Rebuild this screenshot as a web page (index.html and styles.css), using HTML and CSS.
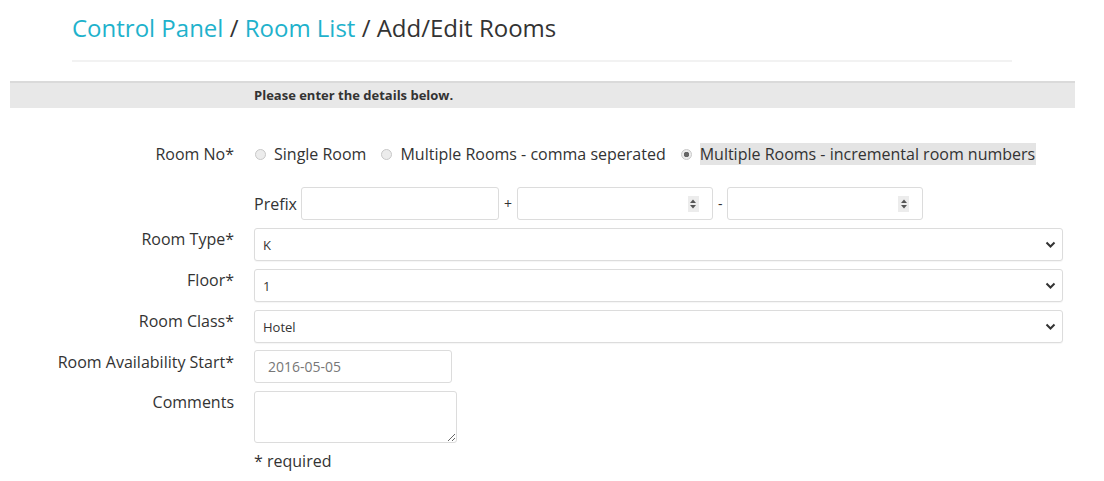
FILE: index.html
```html
<!DOCTYPE html>
<html>
<head>
<meta charset="utf-8">
<link rel="stylesheet" href="styles.css">
</head>
<body>
<div class="header">
  <h1 class="title"><a class="crumb">Control Panel</a> / <a class="crumb">Room List</a> / Add/Edit Rooms</h1>
</div>
<div class="bar">Please enter the details below.</div>
<form class="form">
  <label class="lbl lbl-radio">Room No*</label>
  <div class="radios">
    <label class="opt"><input type="radio" name="rn" class="radio"><span>Single Room</span></label>
    <label class="opt"><input type="radio" name="rn" class="radio"><span>Multiple Rooms - comma seperated</span></label>
    <label class="opt"><input type="radio" name="rn" class="radio" checked><span class="hl">Multiple Rooms - incremental room numbers</span></label>
  </div>

  <div class="spacer"></div>
  <div class="prefix-row">
    <span class="ptext">Prefix</span>
    <input class="box prefix" type="text">
    <span class="sep">+</span>
    <div class="box num"><input class="bare" type="text"><span class="spin"><svg width="8" height="12" viewBox="0 0 8 12"><path d="M4 1.5 L7 5 L1 5 Z" fill="#555"/><path d="M4 10.5 L7 7 L1 7 Z" fill="#555"/></svg></span></div>
    <span class="sep">-</span>
    <div class="box num"><input class="bare" type="text"><span class="spin"><svg width="8" height="12" viewBox="0 0 8 12"><path d="M4 1.5 L7 5 L1 5 Z" fill="#555"/><path d="M4 10.5 L7 7 L1 7 Z" fill="#555"/></svg></span></div>
  </div>

  <label class="lbl">Room Type*</label>
  <div class="box sel"><span class="seltext">K</span><svg class="chev" width="11" height="8" viewBox="0 0 11 8"><path d="M1.5 1.5 L5.5 5.5 L9.5 1.5" fill="none" stroke="#333" stroke-width="2"/></svg></div>

  <label class="lbl">Floor*</label>
  <div class="box sel"><span class="seltext">1</span><svg class="chev" width="11" height="8" viewBox="0 0 11 8"><path d="M1.5 1.5 L5.5 5.5 L9.5 1.5" fill="none" stroke="#333" stroke-width="2"/></svg></div>

  <label class="lbl">Room Class*</label>
  <div class="box sel"><span class="seltext">Hotel</span><svg class="chev" width="11" height="8" viewBox="0 0 11 8"><path d="M1.5 1.5 L5.5 5.5 L9.5 1.5" fill="none" stroke="#333" stroke-width="2"/></svg></div>

  <label class="lbl">Room Availability Start*</label>
  <div class="date-wrap"><input class="box date" type="text" value="2016-05-05"></div>

  <label class="lbl">Comments</label>
  <div><textarea class="box comments"></textarea></div>

  <div class="spacer"></div>
  <div class="req">* required</div>
</form>
</body>
</html>
```

FILE: styles.css
```css
* { box-sizing: border-box; }
body {
  margin: 0;
  font-family: "Open Sans", "DejaVu Sans", sans-serif;
  color: #333;
  background: #fff;
}
.header {
  margin-left: 72px;
  width: 940px;
  padding-top: 12px;
  padding-bottom: 16px;
  border-bottom: 2px solid #f2f2f2;
}
.title {
  margin: 0;
  font-size: 24px;
  font-weight: 400;
  line-height: 32px;
  color: #333;
}
.crumb { color: #1fb2cc; text-decoration: none; }
.bar {
  margin-top: 19px;
  margin-left: 10px;
  width: 1065px;
  height: 27px;
  border-top: 2px solid #dadada;
  background: #e8e8e8;
  padding-left: 244px;
  font-size: 13px;
  font-weight: 700;
  line-height: 24px;
  color: #333;
}
.form {
  margin: 35px 0 0 10px;
  width: 1053px;
  display: grid;
  grid-template-columns: 224px 809px;
  column-gap: 20px;
  row-gap: 8px;
  align-items: start;
}
.lbl {
  text-align: right;
  font-size: 16px;
  line-height: 20px;
  padding-top: 1px;
}
.lbl-radio { padding-top: 0; line-height: 22px; }
.radios {
  display: flex;
  align-items: center;
  gap: 14px;
  font-size: 16px;
  line-height: 22px;
}
.opt { display: flex; align-items: center; }
.radio {
  appearance: none;
  -webkit-appearance: none;
  width: 11px;
  height: 11px;
  margin: 0 8px 0 1px;
  border-radius: 50%;
  border: 1px solid #c8c8c8;
  background: #ececec;
}
.radio:checked {
  background: radial-gradient(circle, #666 0 2.5px, #ececec 3px);
}
.hl { background: #e4e4e4; padding-right: 1px; }
.spacer { height: 13px; }
.prefix-row {
  display: flex;
  align-items: center;
  font-size: 16px;
  margin-top: 14px;
}
.ptext { margin-right: 4px; }
.sep { margin: 0 5px; font-size: 14px; color: #333; }
.box {
  border: 1px solid #dcdcdc;
  border-radius: 3px;
  background: #fff;
  height: 33px;
  font-family: "Open Sans", "DejaVu Sans", sans-serif;
}
.prefix { width: 198px; }
.num {
  width: 196px;
  display: flex;
  align-items: center;
}
.bare {
  border: 0;
  outline: none;
  flex: 1;
  min-width: 0;
  height: 100%;
  background: transparent;
}
.spin {
  width: 11px;
  height: 16px;
  background: #ececec;
  margin-right: 13px;
  display: flex;
  align-items: center;
  justify-content: center;
}
.sel {
  display: flex;
  align-items: center;
  justify-content: space-between;
  padding: 0 6px 0 8px;
  font-size: 13px;
  color: #333;
  box-shadow: 0 1px 1px rgba(0,0,0,0.04);
}
.seltext { padding-top: 1px; }
.date-wrap { margin-top: -1px; }
.date {
  width: 198px;
  padding: 0 13px;
  font-size: 14px;
  color: #777;
}
.comments {
  display: block;
  width: 203px;
  height: 52px;
  resize: vertical;
}
.req {
  font-size: 16px;
  line-height: 22px;
  margin-top: -1px;
}
```
